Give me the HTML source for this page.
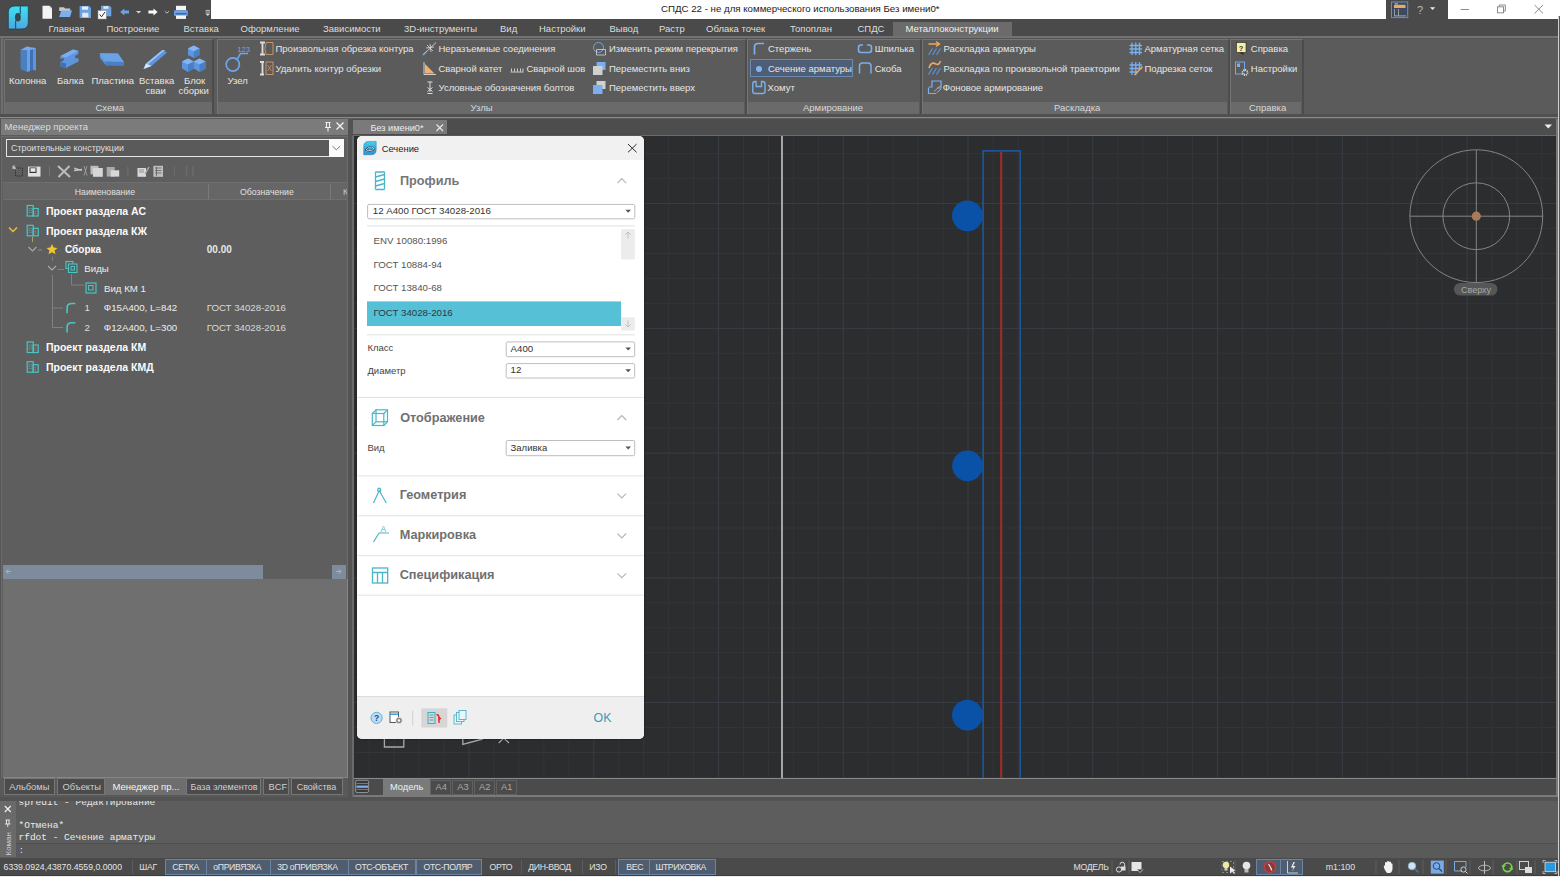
<!DOCTYPE html>
<html><head><meta charset="utf-8">
<style>
*{box-sizing:border-box}
html,body{margin:0;padding:0}
body{width:1560px;height:877px;overflow:hidden;position:relative;background:#5b5b5b;font-family:"Liberation Sans",sans-serif;}
.a{position:absolute}
.t{position:absolute;white-space:nowrap;line-height:20px;height:20px;font-family:"Liberation Sans",sans-serif}
.rb{font-size:9.5px;color:#e6e6e6}
svg{position:absolute;overflow:visible}
</style></head><body>

<!-- ===== TITLE BAR ===== -->
<div class="a" style="left:0;top:0;width:1560px;height:36px;background:#4a4a4a"></div>
<div class="a" style="left:211px;top:0;width:1175px;height:19px;background:#fff"></div>
<div class="a" style="left:1448px;top:0;width:112px;height:19px;background:#fff"></div>
<div class="t" style="left:661px;top:-1px;font-size:9.7px;color:#1a1a1a">СПДС 22 - не для коммерческого использования Без имени0*</div>
<!-- logo -->
<svg style="left:0;top:0" width="60" height="36">
  <defs><linearGradient id="lg" x1="0" y1="0" x2="0" y2="1"><stop offset="0" stop-color="#3ee0f2"/><stop offset="1" stop-color="#4fa6e2"/></linearGradient></defs>
  <path d="M8.3 29 L8.3 12.5 Q8.3 6 14.8 6 L28.3 6 L28.3 22.5 Q28.3 29 21.8 29 Z" fill="url(#lg)" stroke="#1b4150" stroke-width="0.8"/>
  <path d="M20.3 6.3 V14 M15.6 20.5 V28.7" fill="none" stroke="#1f5a70" stroke-width="1.2"/>
  <ellipse cx="17.9" cy="17.3" rx="2.9" ry="4.3" fill="#37474e"/>
</svg>
<!-- QAT -->
<svg style="left:0;top:0" width="215" height="20">
  <path d="M42.5 5.8 H49.5 L52 8.3 V18.8 H42.5 Z" fill="#f4f4f4"/>
  <path d="M49.5 5.8 V8.3 H52" fill="#d0d0d0"/>
  <path d="M59.2 7.3 H64 L65 8.6 H70.2 V11 H59.2 Z" fill="#c9c9c9"/>
  <path d="M59.2 16.9 L61.3 10.6 H72 L70 16.9 Z" fill="#7cb0ea"/>
  <path d="M79.6 6.1 H89 L91 8.1 V18 H79.6 Z" fill="#6aa2e4"/>
  <rect x="82" y="6.5" width="6" height="3.2" fill="#e8eef6"/>
  <rect x="82.2" y="12.8" width="6.2" height="4.6" fill="#e8e8e8"/>
  <path d="M101 5.8 H109.5 L111.3 7.6 V16.2 H101 Z" fill="#6aa2e4"/>
  <rect x="103.4" y="6.2" width="5" height="2.6" fill="#e0e8f2"/>
  <rect x="98" y="10.6" width="8.2" height="8.4" fill="#fafafa" stroke="#999" stroke-width="0.5"/>
  <path d="M99.6 14.4 L101.6 16.8 L104.9 12" fill="none" stroke="#333" stroke-width="1"/>
  <path d="M120.2 12 L124.3 8.5 V10.6 H129 V13.4 H124.3 V15.5 Z" fill="#6aa2e4"/>
  <path d="M136 11 H141.2 L138.6 13.6 Z" fill="#d8d8d8"/>
  <path d="M157.6 12 L153.5 8.5 V10.6 H148.4 V13.4 H153.5 V15.5 Z" fill="#fafafa"/>
  <path d="M164.8 11.2 L166.9 13.2 L169 11.2" fill="none" stroke="#cfcfcf" stroke-width="0.9"/>
  <rect x="176" y="5.8" width="10" height="4.5" fill="#f4f4f4"/>
  <rect x="174" y="10.3" width="13.8" height="5.7" rx="1" fill="#6aa2e4"/>
  <rect x="175.5" y="13.3" width="11" height="1" fill="#2c4e7a"/>
  <rect x="176" y="15.5" width="10" height="3.4" fill="#f4f4f4"/>
  <path d="M205.5 10.4 H210 M205.5 12 H210" stroke="#d8d8d8" stroke-width="0.8"/>
  <path d="M205.3 13.5 H210.2 L207.75 16 Z" fill="#d8d8d8"/>
</svg>
<!-- right title icons -->
<svg style="left:1386px;top:0" width="174" height="20">
  <rect x="5.5" y="2" width="16.2" height="15.6" fill="#3b4a5e" stroke="#6f8fb8" stroke-width="1"/>
  <rect x="8" y="4.8" width="11.5" height="3.2" fill="#f0a860"/>
  <path d="M8.8 3.8 h3" stroke="#f0a860" stroke-width="1.2"/>
  <path d="M8.5 9 V16 M12.5 9 V16" stroke="#9a9a9a" stroke-width="1"/>
  <rect x="8" y="15.4" width="12" height="1" fill="#aaa"/>
  <text x="31" y="13.6" font-family="Liberation Sans" font-size="11" fill="#b8b8b8">?</text>
  <path d="M44 7.2 H49.2 L46.6 10 Z" fill="#eee"/>
  <path d="M74.7 9.5 H83" stroke="#8a8a8a" stroke-width="1"/>
  <rect x="111.5" y="6.8" width="6" height="6" fill="none" stroke="#8a8a8a" stroke-width="1"/>
  <path d="M113.3 6.8 V5 H119.3 V11 H117.5" fill="none" stroke="#8a8a8a" stroke-width="1"/>
  <path d="M148.5 5 L157 13.4 M157 5 L148.5 13.4" stroke="#8a8a8a" stroke-width="1"/>
</svg>

<!-- ===== RIBBON TABS ===== -->
<div class="a" style="left:893px;top:22px;width:119px;height:14px;background:#6b6b6b"></div>
<div class="t rb" style="left:48.5px;top:19px;color:#dedede">Главная</div>
<div class="t rb" style="left:106.5px;top:19px;color:#dedede">Построение</div>
<div class="t rb" style="left:183.5px;top:19px;color:#dedede">Вставка</div>
<div class="t rb" style="left:240.5px;top:19px;color:#dedede">Оформление</div>
<div class="t rb" style="left:323px;top:19px;color:#dedede">Зависимости</div>
<div class="t rb" style="left:404px;top:19px;color:#dedede">3D-инструменты</div>
<div class="t rb" style="left:500px;top:19px;color:#dedede">Вид</div>
<div class="t rb" style="left:539px;top:19px;color:#dedede">Настройки</div>
<div class="t rb" style="left:609.5px;top:19px;color:#dedede">Вывод</div>
<div class="t rb" style="left:659px;top:19px;color:#dedede">Растр</div>
<div class="t rb" style="left:706px;top:19px;color:#dedede">Облака точек</div>
<div class="t rb" style="left:790px;top:19px;color:#dedede">Топоплан</div>
<div class="t rb" style="left:857.5px;top:19px;color:#dedede">СПДС</div>
<div class="t rb" style="left:905.5px;top:19px;color:#f0f0f0">Металлоконструкции</div>

<!-- ===== RIBBON BODY ===== -->
<div class="a" style="left:0;top:36px;width:1560px;height:2px;background:#727272"></div>
<div class="a" style="left:0;top:38px;width:1560px;height:80px;background:#5b5b5b"></div>
<div class="a" style="left:0;top:38px;width:1560px;height:1px;background:#555"></div>
<div class="a" style="left:1px;top:38px;width:2px;height:78px;background:#6e6e6e"></div>
<div class="a" style="left:0;top:114px;width:1560px;height:2.5px;background:#505050"></div>
<div class="a" style="left:0;top:116.5px;width:1560px;height:1.5px;background:#8a8a8a"></div>
<div class="a" style="left:0;top:118px;width:1560px;height:1px;background:#5a5a5a"></div>
<!-- panels -->
<div class="a" style="left:4px;top:39px;width:210px;height:75px;border-top:1px solid #737373;border-left:1px solid #737373;border-right:2.5px solid #4c4c4c"></div>
<div class="a" style="left:5px;top:101.7px;width:206.5px;height:12.3px;background:#6a6a6a"></div>
<div class="t rb" style="left:95.5px;top:98px;color:#d8d8d8">Схема</div>

<div class="a" style="left:216.5px;top:39px;width:530px;height:75px;border-top:1px solid #737373;border-left:1.5px solid #767676;border-right:2.5px solid #4c4c4c"></div>
<div class="a" style="left:218px;top:101.7px;width:526px;height:12.3px;background:#6a6a6a"></div>
<div class="t rb" style="left:470.5px;top:98px;color:#d8d8d8">Узлы</div>

<div class="a" style="left:746.5px;top:39px;width:175px;height:75px;border-top:1px solid #737373;border-left:1.5px solid #767676;border-right:2.5px solid #4c4c4c"></div>
<div class="a" style="left:748px;top:101.7px;width:171px;height:12.3px;background:#6a6a6a"></div>
<div class="t rb" style="left:803px;top:98px;color:#d8d8d8">Армирование</div>

<div class="a" style="left:921.5px;top:39px;width:308px;height:75px;border-top:1px solid #737373;border-left:1.5px solid #767676;border-right:2.5px solid #4c4c4c"></div>
<div class="a" style="left:923px;top:101.7px;width:304px;height:12.3px;background:#6a6a6a"></div>
<div class="t rb" style="left:1054px;top:98px;color:#d8d8d8">Раскладка</div>

<div class="a" style="left:1229.5px;top:39px;width:74px;height:75px;border-top:1px solid #737373;border-left:1.5px solid #767676;border-right:2.5px solid #4c4c4c"></div>
<div class="a" style="left:1231px;top:101.7px;width:70px;height:12.3px;background:#6a6a6a"></div>
<div class="t rb" style="left:1249px;top:98px;color:#d8d8d8">Справка</div>

<!-- large buttons -->
<div class="t rb" style="left:9px;top:70.5px">Колонна</div>
<div class="t rb" style="left:57px;top:70.5px">Балка</div>
<div class="t rb" style="left:91.5px;top:70.5px">Пластина</div>
<div class="t rb" style="left:139px;top:70.5px">Вставка</div>
<div class="t rb" style="left:145.5px;top:80.8px">сваи</div>
<div class="t rb" style="left:184px;top:70.5px">Блок</div>
<div class="t rb" style="left:178.5px;top:80.8px">сборки</div>
<div class="t rb" style="left:227.5px;top:70.5px">Узел</div>

<!-- small buttons -->
<div class="t rb" style="left:275.5px;top:38.8px">Произвольная обрезка контура</div>
<div class="t rb" style="left:275.5px;top:58.5px">Удалить контур обрезки</div>
<div class="t rb" style="left:438.5px;top:38.8px">Неразъемные соединения</div>
<div class="t rb" style="left:438.5px;top:58.5px">Сварной катет</div>
<div class="t rb" style="left:526.5px;top:58.5px">Сварной шов</div>
<div class="t rb" style="left:438.5px;top:77.6px">Условные обозначения болтов</div>
<div class="t rb" style="left:609px;top:38.8px">Изменить режим перекрытия</div>
<div class="t rb" style="left:609px;top:58.5px">Переместить вниз</div>
<div class="t rb" style="left:609px;top:77.6px">Переместить вверх</div>

<div class="a" style="left:750.2px;top:59.1px;width:102.6px;height:17.6px;background:#4e5e76;border:1px solid #6c8ab2"></div>
<div class="a" style="left:755.8px;top:65.5px;width:6px;height:6px;border-radius:50%;background:#82b6f2"></div>
<div class="t rb" style="left:768px;top:38.8px">Стержень</div>
<div class="t rb" style="left:768px;top:58.5px">Сечение арматуры</div>
<div class="t rb" style="left:767.5px;top:77.6px">Хомут</div>
<div class="t rb" style="left:874.7px;top:38.8px">Шпилька</div>
<div class="t rb" style="left:874.7px;top:58.5px">Скоба</div>

<div class="t rb" style="left:943.5px;top:38.8px">Раскладка арматуры</div>
<div class="t rb" style="left:943.5px;top:58.5px">Раскладка по произвольной траектории</div>
<div class="t rb" style="left:942.8px;top:77.6px">Фоновое армирование</div>
<div class="t rb" style="left:1144.5px;top:38.8px">Арматурная сетка</div>
<div class="t rb" style="left:1144.5px;top:58.5px">Подрезка сеток</div>

<div class="t rb" style="left:1250.8px;top:38.8px">Справка</div>
<div class="t rb" style="left:1250.8px;top:58.5px">Настройки</div>
<svg style="left:0;top:0" width="1560" height="120">
 <!-- Колонна -->
 <path d="M20.5 50 L27 46.5 L27 72 L20.5 69 Z" fill="#4a7fc0"/>
 <path d="M27 46.5 L30 48 L30 71 L27 72 Z" fill="#6aa0e6"/>
 <path d="M30 48 L33 47 L33 70 L30 71Z" fill="#3f72b2"/>
 <path d="M33 47 L36 48.5 L36 70.5 L33 70 Z" fill="#5d95de"/>
 <path d="M20.5 50 L27 46.5 L36 48.5 L30 50 Z" fill="#78aaf0"/>
 <!-- Балка -->
 <path d="M60.5 56 L73 49.5 L78.5 51 L78.5 54 L75 56 L75.5 58.5 L78.5 58 L78.5 61.5 L66 68 L60.5 66.5 L60.5 62 L64 60 L63.5 58 L60.5 59 Z" fill="#5d95de"/>
 <path d="M60.5 56 L73 49.5 L78.5 51 L66 57.5 Z" fill="#7aaef0"/>
 <path d="M66 68 L60.5 66.5 L60.5 62 L66 63.5 Z" fill="#3f72b2"/>
 <!-- Пластина -->
 <path d="M99.8 53.2 L118 53.5 L123.8 62 L123.5 65.5 L106 65.3 L100 58 Z" fill="#5d95de"/>
 <path d="M99.8 53.2 L118 53.5 L123.8 62 L104.8 61.5 Z" fill="#6aa2e8"/>
 <path d="M104.8 61.5 L123.8 62 L123.5 65.5 L106 65.3 Z" fill="#4a80c6"/>
 <!-- Вставка сваи -->
 <path d="M143.5 69 L146 63.5 L162.5 50 L167 52.5 L151.5 66 Z" fill="#5d95de"/>
 <path d="M146 63.5 L162.5 50 L165 50 L148.5 64 Z" fill="#9cc4f4"/>
 <path d="M143.5 69 L146 63.5 L151.5 66 Z" fill="#d8e8fb"/>
 <!-- Блок сборки -->
 <g fill="#5d95de">
  <path d="M193.8 45.5 L199.5 48.5 V55 L193.8 58 L188 55 V48.5 Z"/>
  <path d="M188 58.5 L193.8 61.5 V68.5 L188 72 L182 68.5 V61.5 Z"/>
  <path d="M199.5 58.5 L205.5 61.5 V68.5 L199.5 72 L193.8 68.5 V61.5 Z"/>
 </g>
 <g fill="#84b4f2">
  <path d="M193.8 45.5 L199.5 48.5 L193.8 51.5 L188 48.5 Z"/>
  <path d="M188 58.5 L193.8 61.5 L188 64.5 L182 61.5 Z"/>
  <path d="M199.5 58.5 L205.5 61.5 L199.5 64.5 L193.8 61.5 Z"/>
 </g>
 <g fill="#4a7fc4">
  <path d="M193.8 51.5 L199.5 48.5 V55 L193.8 58 Z"/>
  <path d="M188 64.5 L193.8 61.5 V68.5 L188 72 Z"/>
  <path d="M199.5 64.5 L205.5 61.5 V68.5 L199.5 72 Z"/>
 </g>
 <!-- Узел -->
 <circle cx="232.8" cy="64.5" r="6.6" fill="none" stroke="#6ea6ec" stroke-width="1.7"/>
 <path d="M237 59.5 L240.5 53.6 H248" fill="none" stroke="#6ea6ec" stroke-width="1.5"/>
 <text x="237.3" y="52.3" font-family="Liberation Sans" font-size="7.6" fill="#6ea6ec">123</text>

 <!-- Произвольная обрезка контура -->
 <path d="M260 42.5 H265 M262.5 42.5 V54.5 M260 54.5 H265" stroke="#dcdcdc" stroke-width="1.8" fill="none"/>
 <path d="M266.2 42.5 H273 V54.5 H266.2 Q263.5 48.5 266.2 42.5 Z" fill="none" stroke="#d09a68" stroke-width="0.9"/>
 <!-- Удалить контур -->
 <path d="M260 62 H264 M262.5 62 V74.5 M260 74.5 H264" stroke="#dcdcdc" stroke-width="1.8" fill="none"/>
 <rect x="266" y="62" width="7" height="12.5" fill="none" stroke="#d09a68" stroke-width="0.9"/>
 <path d="M267.5 65 L271.5 71 M271.5 65 L267.5 71" stroke="#d09a68" stroke-width="0.7"/>
 <!-- Неразъемные -->
 <path d="M423 55 L436 42.5" stroke="#d8d8d8" stroke-width="0.9"/>
 <path d="M427 45 L433 51 M430 44 L431 52 M426 48 L434 47" stroke="#d8d8d8" stroke-width="0.8"/>
 <path d="M423 55 L426 52" stroke="#7ab0f0" stroke-width="1.5"/>
 <!-- Сварной катет -->
 <path d="M424 62 V74.5 H436" stroke="#dcdcdc" stroke-width="0.9" fill="none"/>
 <path d="M425 64 L425 73.5 L434.5 73.5 Z" fill="#f0b070"/>
 <!-- шов -->
 <path d="M510.5 72 H523.5 M511.5 68.5 V71.5 M514.5 68.5 V71.5 M517.5 68.5 V71.5 M520.5 68.5 V71.5 M523 68.5 V71.5" stroke="#dcdcdc" stroke-width="0.9"/>
 <!-- болты -->
 <path d="M427.5 82 H432.5 M430 82 V92 M427.5 87.5 L432.5 91.5 M432.5 87.5 L427.5 91.5 M427.5 93.5 H432.5" stroke="#dcdcdc" stroke-width="1"/>
 <!-- Изменить режим -->
 <circle cx="598.5" cy="47.5" r="5" fill="none" stroke="#7aaae0" stroke-width="0.9"/>
 <path d="M596.5 49.5 H605.5 V55 H596.5 Z" fill="none" stroke="#c8c8c8" stroke-width="0.9"/>
 <!-- Переместить вниз -->
 <rect x="596.5" y="62" width="9" height="8" fill="#7ab0f0"/>
 <rect x="593" y="66" width="9.5" height="9" fill="#d0d0d0"/>
 <!-- Переместить вверх -->
 <rect x="596.5" y="81" width="9" height="8" fill="#d0d0d0"/>
 <rect x="593" y="85" width="9.5" height="9" fill="#7ab0f0"/>
 <!-- Стержень -->
 <path d="M754.5 54.5 V47 Q754.5 43.5 758 43.5 H764" fill="none" stroke="#7ab0f0" stroke-width="1.7"/>
 <!-- Хомут -->
 <path d="M756 81.5 H755 Q752.8 81.5 752.8 84 V91.5 Q752.8 93.5 755 93.5 H762.8 Q765 93.5 765 91.5 V84 Q765 81.5 762.8 81.5 H761.5 V86.5 H756.2 Z" fill="none" stroke="#7ab0f0" stroke-width="1.4"/>
 <!-- Шпилька -->
 <path d="M863 45 H861 Q858.5 45 858.5 47.5 V50 Q858.5 52.5 861 52.5 H869 Q871.5 52.5 871.5 50 V47.5 Q871.5 45 869 45 H867" fill="none" stroke="#7ab0f0" stroke-width="1.6"/>
 <!-- Скоба -->
 <path d="M859.5 73.5 V66 Q859.5 63 862.5 63 H868 Q871 63 871 66 V73.5" fill="none" stroke="#7ab0f0" stroke-width="1.5"/>
 <!-- Раскладка арматуры -->
 <path d="M928.5 44 H939 M936 41.5 L939.5 44 L936 46.5" fill="none" stroke="#f0a860" stroke-width="1.4"/>
 <path d="M928.5 55 L932.5 48.5 M932.5 55 L936.5 48.5 M936.5 55 L940.5 48.5" stroke="#5d8fcc" stroke-width="1.3"/>
 <!-- Раскладка по траектории -->
 <path d="M929 68 Q931 61 936 64 Q939 65.5 940.5 61" fill="none" stroke="#f0a860" stroke-width="1.6"/>
 <path d="M928.5 74.5 L932.5 68 M932.5 74.5 L936.5 68 M936.5 74.5 L940.5 68" stroke="#5d8fcc" stroke-width="1.3"/>
 <!-- Фоновое армирование -->
 <path d="M929 87 H932 V81 H941 V88 H937" fill="none" stroke="#7ab0f0" stroke-width="1.2"/>
 <path d="M928.5 87.5 V93.5 H936" fill="none" stroke="#7ab0f0" stroke-width="1.2"/>
 <path d="M934 91.5 L940 86 M936.5 93 L941 89" stroke="#aaa" stroke-width="1"/>
 <!-- Арматурная сетка -->
 <path d="M1129.5 45.5 H1142 M1129.5 49 H1142 M1129.5 52.5 H1142 M1132 42.5 V55 M1135.8 42.5 V55 M1139.5 42.5 V55" stroke="#7ab0f0" stroke-width="1.3"/>
 <!-- Подрезка сеток -->
 <path d="M1129.5 65 H1142 M1129.5 68.5 H1142 M1129.5 72 H1138 M1132 62 V75 M1135.8 62 V75 M1139.5 62 V70" stroke="#7ab0f0" stroke-width="1.3"/>
 <path d="M1134.5 75 L1142.5 66.5" stroke="#f0a860" stroke-width="1.4"/>
 <!-- Справка -->
 <rect x="1236.5" y="42.5" width="9.5" height="10" fill="#f4f0a8" stroke="#222" stroke-width="0.6"/>
 <path d="M1239 52.5 L1243 52.5 L1244 55" fill="#222"/>
 <text x="1238.8" y="50.6" font-family="Liberation Sans" font-size="7.5" font-weight="bold" fill="#333">?</text>
 <!-- Настройки -->
 <rect x="1235.5" y="62" width="9" height="12" fill="none" stroke="#7ab0f0" stroke-width="0.9"/>
 <rect x="1237" y="63.5" width="3" height="3.5" fill="#7ab0f0"/>
 <circle cx="1245" cy="72.5" r="2.6" fill="none" stroke="#e0e0e0" stroke-width="1.6" stroke-dasharray="1.2 0.8"/>
 <circle cx="1245" cy="72.5" r="1.1" fill="#5b5b5b"/>
</svg>
<!--RIBBON_ICONS-->

<!-- ===== LEFT PANEL ===== -->
<div class="a" style="left:0;top:119px;width:348px;height:659px;background:#5e5e5e"></div>
<div class="a" style="left:0;top:119px;width:348px;height:15.5px;background:#7b7b7b"></div>
<div class="a" style="left:0;top:134.5px;width:348px;height:1px;background:#5c5c5c"></div>
<div class="a" style="left:1px;top:135.5px;width:346.5px;height:642px;border-left:1px solid #6c6c6c;border-top:1px solid #6c6c6c;border-right:1px solid #6c6c6c"></div>
<div class="a" style="left:0;top:119px;width:1px;height:659px;background:#555"></div>
<div class="t" style="left:4.6px;top:117px;font-size:9.5px;color:#dcdcdc">Менеджер проекта</div>
<svg style="left:320px;top:119px" width="28" height="16">
  <path d="M5.5 3.5 H10.5 M6.5 3.5 V8.5 M9.5 3.5 V8.5 M5 8.5 H11 M8 8.5 V12.5" stroke="#eee" stroke-width="1.1" fill="none"/>
  <path d="M16.5 3.5 L23.5 10.5 M23.5 3.5 L16.5 10.5" stroke="#f2f2f2" stroke-width="1.3"/>
</svg>
<!-- combo -->
<div class="a" style="left:5.7px;top:138.8px;width:338px;height:18px;background:#5a5a5a;border:1.5px solid #e6e6e6"></div>
<div class="a" style="left:329px;top:138.8px;width:14.7px;height:18px;background:#fafafa"></div>
<svg style="left:329px;top:139px" width="15" height="18"><path d="M3.5 7.2 L7.3 10.8 L11.1 7.2" fill="none" stroke="#777" stroke-width="1"/></svg>
<div class="t" style="left:11px;top:138px;font-size:8.9px;color:#dedede">Строительные конструкции</div>
<!-- toolbar -->
<svg style="left:0;top:157px" width="348" height="26">
  <g stroke="#d8d8d8" fill="none">
   <rect x="15.5" y="11" width="7" height="8" stroke="#222" stroke-dasharray="1.2 1" stroke-width="0.8"/>
   <path d="M12.5 9 L16 12.5 M14 8 V12 M12 11 H16" stroke="#e0e0e0" stroke-width="0.8"/>
  </g>
  <rect x="28" y="9.6" width="12.5" height="10" fill="#e0e0e0"/>
  <rect x="29.5" y="10.5" width="7" height="5.5" fill="#333"/>
  <rect x="30.5" y="11.2" width="5" height="3.6" fill="#e8e8e8"/>
  <path d="M49.5 9 V19.5" stroke="#777" stroke-width="0.8"/>
  <path d="M58 9 L70 20 M69.5 9 L58.5 20" stroke="#bdbdbd" stroke-width="2"/>
  <path d="M74 11 L82 13.5 M74 13.5 L82 12.5" stroke="#c8c8c8" stroke-width="1.3"/>
  <path d="M84 9 L87 18.5 M87 9 L84 18.5" stroke="#aaa" stroke-width="0.8"/>
  <rect x="90.5" y="8.8" width="8" height="8.5" fill="#bdbdbd"/>
  <rect x="93" y="11" width="9.8" height="8.8" fill="#d6d6d6"/>
  <rect x="106.7" y="10" width="8" height="9.5" fill="#aaa"/>
  <rect x="110.7" y="13.3" width="8.5" height="6.3" fill="#d8d8d8"/>
  <path d="M127.9 9.5 V19.5" stroke="#777" stroke-width="0.8"/>
  <rect x="137.5" y="11" width="8.5" height="8.8" fill="#d8d8d8"/>
  <path d="M139 13 H144 M139 15 H144" stroke="#777" stroke-width="0.7"/>
  <path d="M145 17 L149 10" stroke="#aaa" stroke-width="1.5"/>
  <rect x="153.4" y="8.8" width="9.6" height="11" fill="#c0c0c0"/>
  <path d="M155 11 H161.5 M155 13.5 H161.5 M155 16 H161.5 M156.5 10 V19" stroke="#555" stroke-width="0.7"/>
  <path d="M174.5 9.5 V19.5" stroke="#6e6e6e" stroke-width="0.8"/>
  <path d="M186.5 9 V19.5 M193 9 V19.5" stroke="#6c6c6c" stroke-width="1.6"/>
</svg>
<!-- column header -->
<div class="a" style="left:3px;top:182px;width:343.5px;height:18px;background:#666;border-top:1px solid #6f6f6f;border-bottom:1px solid #707070"></div>
<div class="a" style="left:208px;top:184px;width:1px;height:15px;background:#7a7a7a"></div>
<div class="a" style="left:330px;top:184px;width:1px;height:15px;background:#7a7a7a"></div>
<div class="t" style="left:74.8px;top:181.6px;font-size:8.7px;color:#e0e0e0">Наименование</div>
<div class="t" style="left:240px;top:181.6px;font-size:8.7px;color:#e0e0e0">Обозначение</div>
<div style="position:absolute;left:343px;top:182px;width:3.5px;height:18px;overflow:hidden"><div class="t" style="left:0;top:-0.4px;font-size:8.7px;color:#bcd">К</div></div>
<!-- tree -->
<div class="t" style="left:46px;top:200.8px;font-size:10.5px;font-weight:bold;color:#fbfbfb">Проект раздела АС</div>
<div class="t" style="left:46px;top:220.6px;font-size:10.5px;font-weight:bold;color:#fbfbfb">Проект раздела КЖ</div>
<div class="t" style="left:65px;top:239.7px;font-size:10px;font-weight:bold;color:#fbfbfb">Сборка</div>
<div class="t" style="left:206.8px;top:239.5px;font-size:10px;font-weight:bold;color:#e8e8e8">00.00</div>
<div class="t" style="left:84.3px;top:259px;font-size:9.7px;color:#eeeeee">Виды</div>
<div class="t" style="left:104px;top:278.7px;font-size:9.7px;color:#eeeeee">Вид КМ 1</div>
<div class="t" style="left:84.6px;top:298.3px;font-size:9.7px;color:#dddddd">1</div>
<div class="t" style="left:103.8px;top:298.3px;font-size:9.7px;color:#eeeeee">Ф15А400, L=842</div>
<div class="t" style="left:206.7px;top:298.3px;font-size:9.7px;color:#d8d8d8">ГОСТ 34028-2016</div>
<div class="t" style="left:84.6px;top:317.5px;font-size:9.7px;color:#dddddd">2</div>
<div class="t" style="left:103.8px;top:317.5px;font-size:9.7px;color:#eeeeee">Ф12А400, L=300</div>
<div class="t" style="left:206.7px;top:317.5px;font-size:9.7px;color:#d8d8d8">ГОСТ 34028-2016</div>
<div class="t" style="left:46px;top:337.3px;font-size:10.5px;font-weight:bold;color:#fbfbfb">Проект раздела КМ</div>
<div class="t" style="left:46px;top:357px;font-size:10.5px;font-weight:bold;color:#fbfbfb">Проект раздела КМД</div>
<svg style="left:0;top:195px" width="200" height="185">
  <defs>
   <g id="bld">
    <rect x="0.5" y="0.5" width="6" height="10.5" fill="none" stroke="#4cc4c4" stroke-width="1.2"/>
    <rect x="6.5" y="3.5" width="5" height="7.5" fill="none" stroke="#4cc4c4" stroke-width="1.2"/>
    <path d="M2.5 3 V9 M4.5 3 V9 M8.5 6 V9" stroke="#4cc4c4" stroke-width="0.9" stroke-dasharray="1 1"/>
   </g>
   <path id="hook" d="M0.8 11 V5.5 Q0.8 1.2 5.5 1.2 H9" fill="none" stroke="#4cc4c4" stroke-width="1.6"/>
  </defs>
  <use href="#bld" x="26.7" y="10"/>
  <use href="#bld" x="26.7" y="29.8"/>
  <use href="#bld" x="26.7" y="146.5"/>
  <use href="#bld" x="26.7" y="166.2"/>
  <path d="M9 32.5 L13 36.5 L17 32.5" fill="none" stroke="#e8c040" stroke-width="1.5"/>
  <path d="M32.5 42 V47" stroke="#b0a060" stroke-width="1"/>
  <path d="M28.5 52 L32.5 56 L36.5 52" fill="none" stroke="#aaa" stroke-width="1.1"/>
  <path d="M38 55 H42" stroke="#999" stroke-width="0.8"/>
  <path d="M52 49 L53.6 52.6 L57.5 52.9 L54.5 55.4 L55.5 59.3 L52 57.2 L48.5 59.3 L49.5 55.4 L46.5 52.9 L50.4 52.6 Z" fill="#f4c430"/>
  <path d="M52.5 61.5 V66" stroke="#888" stroke-width="0.8"/>
  <path d="M48 71 L52 75 L56 71" fill="none" stroke="#aaa" stroke-width="1.1"/>
  <path d="M57.5 74.5 H64" stroke="#888" stroke-width="0.8"/>
  <rect x="66" y="66.5" width="7" height="7" fill="none" stroke="#4cc4c4" stroke-width="1.1"/>
  <rect x="68.5" y="69" width="8.5" height="8.5" fill="#5e5e5e" stroke="#4cc4c4" stroke-width="1.1"/>
  <rect x="71" y="71.5" width="3.5" height="3.5" fill="none" stroke="#4cc4c4" stroke-width="1"/>
  <path d="M71.5 79 V90 H84" fill="none" stroke="#8a8a8a" stroke-width="0.8"/>
  <rect x="86" y="88" width="10" height="10" fill="none" stroke="#4cc4c4" stroke-width="1.2"/>
  <rect x="88.5" y="90.5" width="4.5" height="4.5" fill="none" stroke="#4cc4c4" stroke-width="1"/>
  <path d="M52.5 80 V132.5 H63 M52.5 113 H63" fill="none" stroke="#8a8a8a" stroke-width="0.8"/>
  <use href="#hook" x="66.3" y="107.3"/>
  <use href="#hook" x="66.3" y="126.5"/>
</svg>
<!-- h scrollbar -->
<div class="a" style="left:3px;top:564.6px;width:260px;height:14.2px;background:#7d8b9c"></div>
<div class="a" style="left:332px;top:564.6px;width:14px;height:14.2px;background:#7d8b9c"></div>
<svg style="left:0;top:564px" width="348" height="15">
 <path d="M11 7.5 H6 M8.5 5 L6 7.5 L8.5 10" fill="none" stroke="#a8b4c2" stroke-width="1"/>
 <path d="M336 7.5 H341 M338.5 5 L341 7.5 L338.5 10" fill="none" stroke="#a8b4c2" stroke-width="1"/>
</svg>
<div class="a" style="left:3px;top:578.8px;width:344.5px;height:199px;background:#6f6f6f;border-right:1px solid #858585;border-bottom:1px solid #858585"></div>
<!-- left tabs -->
<div class="a" style="left:0;top:777.8px;width:348px;height:19.2px;background:#595959"></div>
<div class="a" style="left:3.8px;top:778px;width:51.2px;height:17px;background:#4b4b4b;border:1px solid #767676"></div>
<div class="a" style="left:57.2px;top:778px;width:47.5px;height:17px;background:#4b4b4b;border:1px solid #767676"></div>
<div class="a" style="left:186px;top:778px;width:75px;height:17px;background:#4b4b4b;border:1px solid #767676"></div>
<div class="a" style="left:263px;top:778px;width:26px;height:17px;background:#4b4b4b;border:1px solid #767676"></div>
<div class="a" style="left:291px;top:778px;width:52px;height:17px;background:#4b4b4b;border:1px solid #767676"></div>
<div class="a" style="left:105px;top:777.8px;width:80.5px;height:17.5px;background:#6e6e6e"></div>
<div class="t" style="left:9.3px;top:776.5px;font-size:9.3px;color:#cfcfcf">Альбомы</div>
<div class="t" style="left:62.6px;top:776.5px;font-size:9.3px;color:#cfcfcf">Объекты</div>
<div class="t" style="left:112.4px;top:776.5px;font-size:9.5px;color:#f4f4f4">Менеджер пр...</div>
<div class="t" style="left:190.5px;top:776.5px;font-size:9px;color:#cfcfcf">База элементов</div>
<div class="t" style="left:268.5px;top:776.5px;font-size:9.3px;color:#cfcfcf">BCF</div>
<div class="t" style="left:296.7px;top:776.5px;font-size:9px;color:#cfcfcf">Свойства</div>

<!-- ===== DOC AREA ===== -->
<div class="a" style="left:348px;top:119px;width:4.5px;height:678px;background:#535353"></div>
<div class="a" style="left:353px;top:119px;width:1205px;height:15.5px;background:#4d4d4d"></div>
<div class="a" style="left:353px;top:134.5px;width:1205px;height:1.5px;background:#6a6a6a"></div>
<div class="a" style="left:353.1px;top:120px;width:93.8px;height:14px;background:#7a7a7a"></div>
<div class="t" style="left:370.4px;top:117.8px;font-size:9.2px;color:#ececec">Без имени0*</div>
<svg style="left:430px;top:119px" width="20" height="16"><path d="M6.5 5.5 L13 12 M13 5.5 L6.5 12" stroke="#eaeaea" stroke-width="1.1"/></svg>
<svg style="left:1530px;top:119px" width="30" height="16"><path d="M14.5 5.5 H22 L18.25 9.5 Z" fill="#eee"/></svg>
<div class="a" style="left:354px;top:136px;width:1202px;height:642px;background:#2c2d2f"></div>
<svg style="left:0;top:0" width="1560" height="800">
 <path d="M369.25 136V778 M394.20 136V778 M419.15 136V778 M444.10 136V778 M494.00 136V778 M518.95 136V778 M543.90 136V778 M568.85 136V778 M618.75 136V778 M643.70 136V778 M668.65 136V778 M693.60 136V778 M743.50 136V778 M768.45 136V778 M793.40 136V778 M818.35 136V778 M868.25 136V778 M893.20 136V778 M918.15 136V778 M943.10 136V778 M993.00 136V778 M1017.95 136V778 M1042.90 136V778 M1067.85 136V778 M1117.75 136V778 M1142.70 136V778 M1167.65 136V778 M1192.60 136V778 M1242.50 136V778 M1267.45 136V778 M1292.40 136V778 M1317.35 136V778 M1367.25 136V778 M1392.20 136V778 M1417.15 136V778 M1442.10 136V778 M1492.00 136V778 M1516.95 136V778 M1541.90 136V778 M354 153.70H1556 M354 178.65H1556 M354 228.55H1556 M354 253.50H1556 M354 278.45H1556 M354 303.40H1556 M354 353.30H1556 M354 378.25H1556 M354 403.20H1556 M354 428.15H1556 M354 478.05H1556 M354 503.00H1556 M354 527.95H1556 M354 552.90H1556 M354 602.80H1556 M354 627.75H1556 M354 652.70H1556 M354 677.65H1556 M354 727.55H1556 M354 752.50H1556 M354 777.45H1556" stroke="#333539" stroke-width="1" fill="none"/>
 <path d="M469.05 136V778 M593.80 136V778 M718.55 136V778 M843.30 136V778 M968.05 136V778 M1092.80 136V778 M1217.55 136V778 M1342.30 136V778 M1467.05 136V778 M354 203.60H1556 M354 328.35H1556 M354 453.10H1556 M354 577.85H1556 M354 702.60H1556" stroke="#3a3d46" stroke-width="1" fill="none"/>
 <path d="M782 136V778" stroke="#c4c4c4" stroke-width="1.6"/>
 <path d="M983.1 778V150.8H1020.2V778" stroke="#1e5496" stroke-width="1.7" fill="none"/>
 <path d="M1001.2 152V778" stroke="#a82a2a" stroke-width="2"/>
 <circle cx="967.4" cy="215.8" r="15.4" fill="#0a52a8"/>
 <circle cx="967.5" cy="465.9" r="15.3" fill="#0a52a8"/>
 <circle cx="967.4" cy="715.1" r="15.4" fill="#0a52a8"/>
 <circle cx="1476.3" cy="216.2" r="66.4" stroke="#848484" stroke-width="1" fill="none"/>
 <circle cx="1476.3" cy="216.2" r="33.4" stroke="#848484" stroke-width="1" fill="none"/>
 <path d="M1410 216.2H1543M1476.3 150V283" stroke="#848484" stroke-width="1"/>
 <circle cx="1476.3" cy="216.2" r="4.6" fill="#a87a58"/>
 <rect x="1453.9" y="282.9" width="43.5" height="12.6" rx="6.3" fill="#555657"/>
 <text x="1461" y="292.6" font-family="Liberation Sans" font-size="9" fill="#a8a8a8">Сверху</text>
 <path d="M384.4 730V747H403.8V730" stroke="#a8a8a8" stroke-width="1.3" fill="none"/>
 <path d="M462.8 730V744.5L482.8 739" stroke="#a8a8a8" stroke-width="1.3" fill="none"/>
 <path d="M498.7 743L503.8 738L509 743" stroke="#a8a8a8" stroke-width="1.1" fill="none"/>
</svg>
<div class="a" style="left:352.5px;top:777.7px;width:1205px;height:1.5px;background:#8a8a8a"></div>
<div class="a" style="left:353px;top:779.2px;width:1205px;height:15.8px;background:#4b4b4b"></div>
<div class="a" style="left:352.5px;top:795px;width:1205px;height:1.8px;background:#7a7a7a"></div>
<div class="a" style="left:352.2px;top:135.5px;width:1.6px;height:661px;background:#6a6a6a"></div>
<div class="a" style="left:1556px;top:119px;width:1.6px;height:678px;background:#7a7a7a"></div>
<div class="a" style="left:1557.6px;top:16px;width:1.4px;height:861px;background:#d0d0d0"></div>
<div class="a" style="left:1559px;top:16px;width:1px;height:861px;background:#555"></div>
<svg style="left:354px;top:779px" width="20" height="16">
 <rect x="1.6" y="1.3" width="13" height="12.2" rx="1.5" fill="#3a3a3a" stroke="#999" stroke-width="0.9"/>
 <path d="M2.5 4.5 H14 M2.5 10.5 H14" stroke="#888" stroke-width="0.8"/>
 <rect x="2.5" y="6.6" width="11.5" height="2.2" fill="#7ab0f0"/>
</svg>
<div class="a" style="left:383px;top:779.2px;width:47.4px;height:15.8px;background:#7a7a7a"></div>
<div class="a" style="left:430.4px;top:779.5px;width:21px;height:15px;border:1px solid #606060"></div>
<div class="a" style="left:452px;top:779.5px;width:21.3px;height:15px;border:1px solid #606060"></div>
<div class="a" style="left:474px;top:779.5px;width:21px;height:15px;border:1px solid #606060"></div>
<div class="a" style="left:495.6px;top:779.5px;width:21.4px;height:15px;border:1px solid #606060"></div>
<div class="t" style="left:390px;top:776.5px;font-size:9.3px;color:#f2f2f2">Модель</div>
<div class="t" style="left:435.6px;top:776.5px;font-size:9.3px;color:#a8a8a8">A4</div>
<div class="t" style="left:457.3px;top:776.5px;font-size:9.3px;color:#a8a8a8">A3</div>
<div class="t" style="left:479px;top:776.5px;font-size:9.3px;color:#a8a8a8">A2</div>
<div class="t" style="left:501px;top:776.5px;font-size:9.3px;color:#a8a8a8">A1</div>

<!-- ===== COMMAND AREA ===== -->
<div class="a" style="left:0;top:797px;width:1557.6px;height:61px;background:#5d5d5d"></div>
<div class="a" style="left:0;top:796.8px;width:1557.6px;height:4.5px;background:#535353"></div>
<div class="a" style="left:16px;top:843px;width:1541px;height:1px;background:#4e4e4e"></div>
<div class="a" style="left:16px;top:844px;width:1541px;height:14px;background:#5a5a5a"></div>
<div class="a" style="left:0;top:801.3px;width:15.6px;height:56.2px;background:#6a6a6a"></div>
<svg style="left:0;top:801px" width="16" height="57">
 <path d="M4.8 5 L10.8 11 M10.8 5 L4.8 11" stroke="#f0f0f0" stroke-width="1.2"/>
 <path d="M5.5 19 H10 M6.5 19 V23 M9 19 V23 M5 23 H10.5 M7.75 23 V26" stroke="#eee" stroke-width="0.9" fill="none"/>
 <text transform="translate(11.3,54.5) rotate(-90)" font-family="Liberation Sans" font-size="8" fill="#d0d0d0">Коман</text>
</svg>
<div style="position:absolute;left:16px;top:801.3px;width:400px;height:8px;overflow:hidden">
 <div class="t" style="left:2.5px;top:-8.4px;font-family:'Liberation Mono',monospace;font-size:9.5px;color:#e8e8e8">spredit - Редактирование</div>
</div>
<div class="t" style="left:18.5px;top:816px;font-family:'Liberation Mono',monospace;font-size:9.5px;color:#eaeaea">*Отмена*</div>
<div class="t" style="left:18.5px;top:827.5px;font-family:'Liberation Mono',monospace;font-size:9.5px;color:#eaeaea">rfdot - Сечение арматуры</div>
<div class="t" style="left:18.5px;top:841px;font-family:'Liberation Mono',monospace;font-size:9.5px;color:#dcdcdc">:</div>

<!-- ===== STATUS BAR ===== -->
<div class="a" style="left:0;top:857.5px;width:1557.6px;height:18.3px;background:#4a4a4a"></div>
<div class="a" style="left:0;top:875px;width:1557.6px;height:0.8px;background:#3c3c3c"></div>
<div class="a" style="left:0;top:875.8px;width:1560px;height:1.2px;background:#ececec"></div>
<div class="t" style="left:3.6px;top:857px;font-size:8.7px;color:#e6e6e6">6339.0924,43870.4559,0.0000</div>
<div class="a" style="left:164.6px;top:859px;width:251.2px;height:16.3px;background:#4f5d6f;border:1px solid #6a84a6"></div>
<div class="a" style="left:205.6px;top:859px;width:1px;height:16.3px;background:#6a84a6"></div>
<div class="a" style="left:269.6px;top:859px;width:1px;height:16.3px;background:#6a84a6"></div>
<div class="a" style="left:347.9px;top:859px;width:1px;height:16.3px;background:#6a84a6"></div>
<div class="a" style="left:415.8px;top:859px;width:66px;height:16.3px;background:#4f5d6f;border:1px solid #6a84a6"></div>
<div class="a" style="left:618.4px;top:859px;width:97.6px;height:16.3px;background:#4f5d6f;border:1px solid #6a84a6"></div>
<div class="a" style="left:648.5px;top:859px;width:1px;height:16.3px;background:#6a84a6"></div>
<div class="a" style="left:132px;top:860px;width:1px;height:14px;background:#5c5c5c"></div>
<div class="a" style="left:520.5px;top:860px;width:1px;height:14px;background:#5c5c5c"></div>
<div class="a" style="left:581.6px;top:860px;width:1px;height:14px;background:#5c5c5c"></div>
<div class="a" style="left:614.7px;top:860px;width:1px;height:14px;background:#5c5c5c"></div>
<div class="t" style="left:139.2px;top:857px;font-size:8.7px;color:#e0e0e0;letter-spacing:-0.2px">ШАГ</div>
<div class="t" style="left:172.3px;top:857px;font-size:8.7px;color:#e6e6e6;letter-spacing:-0.3px">СЕТКА</div>
<div class="t" style="left:213.3px;top:857px;font-size:8.7px;color:#e6e6e6;letter-spacing:-0.35px">оПРИВЯЗКА</div>
<div class="t" style="left:277.3px;top:857px;font-size:8.7px;color:#e6e6e6;letter-spacing:-0.35px">3D оПРИВЯЗКА</div>
<div class="t" style="left:355px;top:857px;font-size:8.7px;color:#e6e6e6;letter-spacing:-0.35px">ОТС-ОБЪЕКТ</div>
<div class="t" style="left:423.5px;top:857px;font-size:8.7px;color:#e6e6e6;letter-spacing:-0.35px">ОТС-ПОЛЯР</div>
<div class="t" style="left:489.4px;top:857px;font-size:8.7px;color:#e0e0e0;letter-spacing:-0.2px">ОРТО</div>
<div class="t" style="left:528.2px;top:857px;font-size:8.7px;color:#e0e0e0;letter-spacing:-0.3px">ДИН-ВВОД</div>
<div class="t" style="left:589.2px;top:857px;font-size:8.7px;color:#e0e0e0;letter-spacing:-0.2px">ИЗО</div>
<div class="t" style="left:626.2px;top:857px;font-size:8.7px;color:#e6e6e6;letter-spacing:-0.3px">ВЕС</div>
<div class="t" style="left:655.4px;top:857px;font-size:8.7px;color:#e6e6e6;letter-spacing:-0.4px">ШТРИХОВКА</div>
<div class="t" style="left:1073.5px;top:857px;font-size:8.7px;color:#e0e0e0;letter-spacing:-0.3px">МОДЕЛЬ</div>
<div class="t" style="left:1325.8px;top:857px;font-size:8.8px;color:#e0e0e0">m1:100</div>
<div class="a" style="left:1256px;top:859px;width:47.2px;height:16.3px;background:#4f5d6f;border:1px solid #6a84a6"></div>
<div class="a" style="left:1280px;top:859px;width:1px;height:16.3px;background:#6a84a6"></div>
<svg style="left:1100px;top:858px" width="460" height="18">
 <g stroke="#5e5e5e" stroke-width="1">
  <path d="M12 2V16M29 2V16M135 2V16M276 2V16M299 2V16M323 2V16M346 2V16M370 2V16M393 2V16M417 2V16M435 2V16"/>
 </g>
 <circle cx="19" cy="11.5" r="2.6" fill="none" stroke="#ddd" stroke-width="1"/>
 <path d="M20 6.5 A2.3 2.3 0 0 1 24.6 6.5 V9" fill="none" stroke="#ddd" stroke-width="1"/>
 <rect x="21" y="8.5" width="4.5" height="4" fill="#ddd"/>
 <rect x="31.5" y="4" width="10" height="9" fill="#e6e6e6"/>
 <path d="M37 11.5 L40 14.5 L43 11.5" fill="#333" stroke="#e6e6e6" stroke-width="0.8"/>
 <circle cx="125" cy="8.5" r="0.01" fill="none"/>
 <path d="M124 10 L127 7" stroke="#555" stroke-width="0.6"/>
 <rect x="122" y="3.5" width="11.5" height="11" fill="none" stroke="#aaa" stroke-width="0.6" stroke-dasharray="2 2"/>
 <circle cx="126" cy="7" r="3.2" fill="#f0e8a0"/>
 <rect x="124.5" y="10" width="3" height="2.6" fill="#ccc"/>
 <path d="M130 8.5 L130 15.5 L132 13.5 L134 16 L135 15 L133 13 L135.5 12.5 Z" fill="#eee"/>
 <circle cx="146.5" cy="7.5" r="3.8" fill="#e6e6e6"/>
 <rect x="144.5" y="11" width="4" height="3.5" fill="#bbb"/>
 <circle cx="170" cy="9.2" r="5.6" fill="#8a3a3a" stroke="#c84040" stroke-width="1.1"/>
 <path d="M168.5 6 L171.5 11 M170.5 10.5 L172 12.5" stroke="#f4f4f4" stroke-width="1.1"/>
 <path d="M187.5 3 V15 H198" fill="none" stroke="#ddd" stroke-width="0.9"/>
 <path d="M193.5 4 L191 9.5 H193.5 L192 13.5 L195.5 8 H193 L195 4" fill="#eee"/>
 <path d="M287 15 Q283 10 284 7 L285 8 V4.5 Q286 3.5 287 4.5 V3.5 Q288 2.5 289 3.5 V4 Q290 3 291 4 V5.5 Q292 5 292.5 6 V11 Q292 15 289.5 15 Z" fill="#f2f2f2"/>
 <circle cx="312" cy="8" r="3.8" fill="#cfe6f6" stroke="#8ab" stroke-width="0.7"/>
 <path d="M314.5 10.5 L318.5 14.5" stroke="#5577aa" stroke-width="1.4"/>
 <rect x="330.8" y="2.6" width="13" height="13" fill="#7aaae6"/>
 <circle cx="336.5" cy="8" r="3.3" fill="none" stroke="#234a80" stroke-width="1"/>
 <path d="M339 10.5 L342 13.5" stroke="#234a80" stroke-width="1.3"/>
 <path d="M362 13 H354.5 V3.5 H366 V9" fill="none" stroke="#7aaae6" stroke-width="1"/>
 <circle cx="363.5" cy="11.5" r="2.6" fill="none" stroke="#ddd" stroke-width="0.9"/>
 <path d="M365.5 13.5 L367.5 15.5" stroke="#ddd" stroke-width="1"/>
 <ellipse cx="384.5" cy="10" rx="6" ry="2.8" fill="none" stroke="#bbb" stroke-width="0.9"/>
 <path d="M384.5 3 V16" stroke="#bbb" stroke-width="1"/>
 <circle cx="407.5" cy="9.3" r="4.3" fill="none" stroke="#7ad24a" stroke-width="1.7"/>
 <path d="M402 7 L403.5 9.5 L405.5 7.5 M413 11.5 L411.5 9 L409.5 11" fill="#7ad24a" stroke="#7ad24a" stroke-width="0.8"/>
 <rect x="419.5" y="3.5" width="9" height="8" fill="none" stroke="#ddd" stroke-width="0.9"/>
 <rect x="425" y="9" width="7" height="6" fill="#ddd"/>
 <rect x="445" y="4.2" width="10.5" height="9.5" fill="#2a9ae0" stroke="#ddd" stroke-width="0.8"/>
 <path d="M443 2.5 H445.5 M443 2.5 V5 M457 2.5 H454.5 M457 2.5 V5 M443 15.5 H445.5 M443 15.5 V13 M457 15.5 H454.5 M457 15.5 V13" stroke="#ccc" stroke-width="0.8"/>
</svg>

<!-- ===== DIALOG ===== -->
<div class="a" style="left:357px;top:136.2px;width:287.2px;height:602.6px;background:#fff;border-radius:5px;overflow:hidden;box-shadow:0 0 2px rgba(0,0,0,0.6)">
  <div class="a" style="left:0;top:0;width:288px;height:24px;background:#f1f1f1"></div>
  <div class="a" style="left:0;top:560.1px;width:288px;height:43px;background:#efefef;border-top:1px solid #dcdcdc"></div>
</div>
<div class="t" style="left:381.7px;top:138.8px;font-size:9.4px;color:#1e1e1e">Сечение</div>
<svg style="left:357px;top:136.6px" width="288" height="603">
 <!-- title icon -->
 <defs><linearGradient id="dg" x1="0" y1="0" x2="0" y2="1"><stop offset="0" stop-color="#3fd0ee"/><stop offset="1" stop-color="#2f8fd0"/></linearGradient></defs>
 <path d="M6.7 17.8 V9.5 Q6.7 4.4 11.8 4.4 H19.2 V12.7 Q19.2 17.8 14.1 17.8 Z" fill="url(#dg)" stroke="#2a78a8" stroke-width="0.5"/>
 <path d="M9 12.8 Q11 9.6 14.5 10 Q17.3 10.5 16.8 12 Q15.5 14 11.5 13.6 Z" fill="none" stroke="#123" stroke-width="1.5"/>
 <path d="M9 12.8 Q11 9.6 14.5 10 Q17.3 10.5 16.8 12 Q15.5 14 11.5 13.6 Z" fill="none" stroke="#f2fbff" stroke-width="0.8"/>
 <!-- close -->
 <path d="M271 7.1 L279.6 15.3 M279.6 7.1 L271 15.3" stroke="#2a2a2a" stroke-width="1"/>
 <!-- profile icon (rebar) -->
 <g stroke="#4bb6c8" stroke-width="1.3" fill="none">
  <path d="M18.5 34.8 V52.5 M27.5 34.8 V52.5"/>
  <path d="M18.5 35 H27.5 M18.5 52.5 H27.5"/>
  <path d="M18.5 40 L27.5 37.5 M18.5 44.5 L27.5 42 M18.5 49 L27.5 46.5"/>
 </g>
 <path d="M260.4 46.2 L264.8 41.5 L269.2 46.2" fill="none" stroke="#b5b5b5" stroke-width="1.1"/>
 <!-- combo profile -->
 <rect x="10.6" y="67.4" width="267.2" height="14.4" rx="1.5" fill="#fff" stroke="#bdbdbd" stroke-width="1"/>
 <path d="M268.4 72.8 H274 L271.2 75.8 Z" fill="#555"/>
 <path d="M10 88.9 H277.8" stroke="#e0e0e0" stroke-width="1"/>
 <!-- list -->
 <rect x="10" y="164.4" width="254" height="24.6" fill="#56c0d6"/>
 <rect x="264.1" y="92.3" width="13.7" height="30.1" fill="#ececec"/>
 <path d="M271 95 V101.5 M268.5 97.5 L271 95 L273.5 97.5" fill="none" stroke="#b8b8b8" stroke-width="0.8"/>
 <rect x="264.1" y="180.3" width="13.7" height="13.2" fill="#ececec"/>
 <path d="M271 183.5 V190 M268.5 187.5 L271 190 L273.5 187.5" fill="none" stroke="#b8b8b8" stroke-width="0.8"/>
 <path d="M10 197.8 H277.8" stroke="#e0e0e0" stroke-width="1"/>
 <!-- class / diam combos -->
 <rect x="149.2" y="204.9" width="128.5" height="14.8" rx="1.5" fill="#fff" stroke="#bdbdbd" stroke-width="1"/>
 <path d="M268.4 210.6 H274 L271.2 213.6 Z" fill="#555"/>
 <rect x="149.2" y="226.6" width="128.5" height="14.4" rx="1.5" fill="#fff" stroke="#bdbdbd" stroke-width="1"/>
 <path d="M268.4 232.2 H274 L271.2 235.2 Z" fill="#555"/>
 <path d="M0.5 260.4 H286.7" stroke="#dedede" stroke-width="1"/>
 <!-- display icon (cube) -->
 <g stroke="#4bb6c8" stroke-width="1.2" fill="none">
  <rect x="15.3" y="276.5" width="11.5" height="12" />
  <rect x="19" y="272.8" width="11.5" height="12"/>
  <path d="M15.3 276.5 L19 272.8 M26.8 276.5 L30.5 272.8 M15.3 288.5 L19 284.8 M26.8 288.5 L30.5 284.8"/>
 </g>
 <path d="M260.4 283 L264.8 278.5 L269.2 283" fill="none" stroke="#b5b5b5" stroke-width="1.1"/>
 <rect x="149.2" y="303.5" width="128.5" height="15.2" rx="1.5" fill="#fff" stroke="#bdbdbd" stroke-width="1"/>
 <path d="M268.4 309.5 H274 L271.2 312.5 Z" fill="#555"/>
 <path d="M0.5 338.9 H286.7 M0.5 378.8 H286.7 M0.5 418.7 H286.7 M0.5 458.2 H286.7" stroke="#e2e2e2" stroke-width="1"/>
 <!-- geometry icon -->
 <g stroke="#4bb6c8" stroke-width="1.2" fill="none">
  <path d="M16.5 366 L22.2 353.5 L29.3 366"/>
  <circle cx="22.2" cy="353" r="1.6"/>
  <path d="M22.2 350.4 V351.4"/>
 </g>
 <path d="M260.4 356.6 L264.8 361 L269.2 356.6" fill="none" stroke="#b5b5b5" stroke-width="1.1"/>
 <!-- marking icon -->
 <g stroke="#4bb6c8" stroke-width="1.2" fill="none">
  <path d="M16.5 405 L22 396 H32"/>
 </g>
 <text x="23.5" y="394.5" font-family="Liberation Sans" font-size="8.5" fill="#4bb6c8">A</text>
 <path d="M260.4 396.5 L264.8 400.9 L269.2 396.5" fill="none" stroke="#b5b5b5" stroke-width="1.1"/>
 <!-- spec icon -->
 <g stroke="#4bb6c8" stroke-width="1.3" fill="none">
  <rect x="15.5" y="431" width="15.2" height="15"/>
  <path d="M15.5 435.5 H30.7 M20.5 435.5 V446 M25.5 435.5 V446"/>
 </g>
 <path d="M260.4 436.3 L264.8 440.7 L269.2 436.3" fill="none" stroke="#b5b5b5" stroke-width="1.1"/>
 <!-- footer -->
 <circle cx="19.6" cy="580.9" r="5.6" fill="#b8def6" stroke="#5aa6d8" stroke-width="0.9"/>
 <text x="17" y="584.3" font-family="Liberation Sans" font-size="8.5" font-weight="bold" fill="#1f4f80">?</text>
 <rect x="33" y="575" width="8.5" height="10.5" fill="#fff" stroke="#444" stroke-width="0.9"/>
 <path d="M33 577.2 H41.5" stroke="#2a9ad8" stroke-width="1.4"/>
 <circle cx="42" cy="583.5" r="3.3" fill="#888" stroke="#fff" stroke-width="0.6"/>
 <circle cx="42" cy="583.5" r="1.2" fill="#fff"/>
 <path d="M55.7 573.5 V588.5" stroke="#d0d0d0" stroke-width="1"/>
 <rect x="64.3" y="571.3" width="26" height="19.2" fill="#d6d6d6"/>
 <g stroke="#3ab0c0" stroke-width="1" fill="none">
  <rect x="71" y="575.5" width="7" height="11"/>
  <path d="M72.5 578 H76.5 M72.5 580.5 H76.5 M72.5 583 H76.5"/>
 </g>
 <path d="M82 586 V581 Q82 577.5 79.5 577.5" fill="none" stroke="#e03030" stroke-width="1.4"/>
 <path d="M81.5 579 L84.5 581.5 L81.5 584 Z" fill="#e03030"/>
 <g stroke="#4bb6c8" stroke-width="0.9" fill="#eaf6f8">
  <rect x="97" y="578" width="7.5" height="9"/>
  <rect x="99.5" y="575.5" width="7.5" height="9"/>
  <rect x="102" y="573.5" width="7" height="9"/>
 </g>
</svg>
<div class="t" style="left:400px;top:170.7px;font-size:12.7px;font-weight:bold;color:#767676">Профиль</div>
<div class="t" style="left:372.8px;top:200.8px;font-size:9.7px;color:#333">12 А400 ГОСТ 34028-2016</div>
<div class="t" style="left:373.5px;top:231.2px;font-size:9.7px;color:#555">ENV 10080:1996</div>
<div class="t" style="left:373.5px;top:255.2px;font-size:9.7px;color:#555">ГОСТ 10884-94</div>
<div class="t" style="left:373.5px;top:278.4px;font-size:9.7px;color:#555">ГОСТ 13840-68</div>
<div class="t" style="left:373.5px;top:303px;font-size:9.7px;color:#2a3a40">ГОСТ 34028-2016</div>
<div class="t" style="left:367.4px;top:338.4px;font-size:9.5px;color:#444">Класс</div>
<div class="t" style="left:510.6px;top:338.5px;font-size:9.7px;color:#333">А400</div>
<div class="t" style="left:367.4px;top:360.7px;font-size:9.5px;color:#444">Диаметр</div>
<div class="t" style="left:510.6px;top:360.4px;font-size:9.7px;color:#333">12</div>
<div class="t" style="left:400.2px;top:407.8px;font-size:12.7px;font-weight:bold;color:#707070">Отображение</div>
<div class="t" style="left:367.4px;top:438px;font-size:9.5px;color:#444">Вид</div>
<div class="t" style="left:510.6px;top:437.7px;font-size:9.5px;color:#333">Заливка</div>
<div class="t" style="left:399.7px;top:485.4px;font-size:12.7px;font-weight:bold;color:#707070">Геометрия</div>
<div class="t" style="left:399.7px;top:525.3px;font-size:12.7px;font-weight:bold;color:#707070">Маркировка</div>
<div class="t" style="left:399.7px;top:564.9px;font-size:12.7px;font-weight:bold;color:#707070">Спецификация</div>
<div class="t" style="left:593.5px;top:708.3px;font-size:12.4px;color:#3a9bb5">OK</div>

</body></html>
